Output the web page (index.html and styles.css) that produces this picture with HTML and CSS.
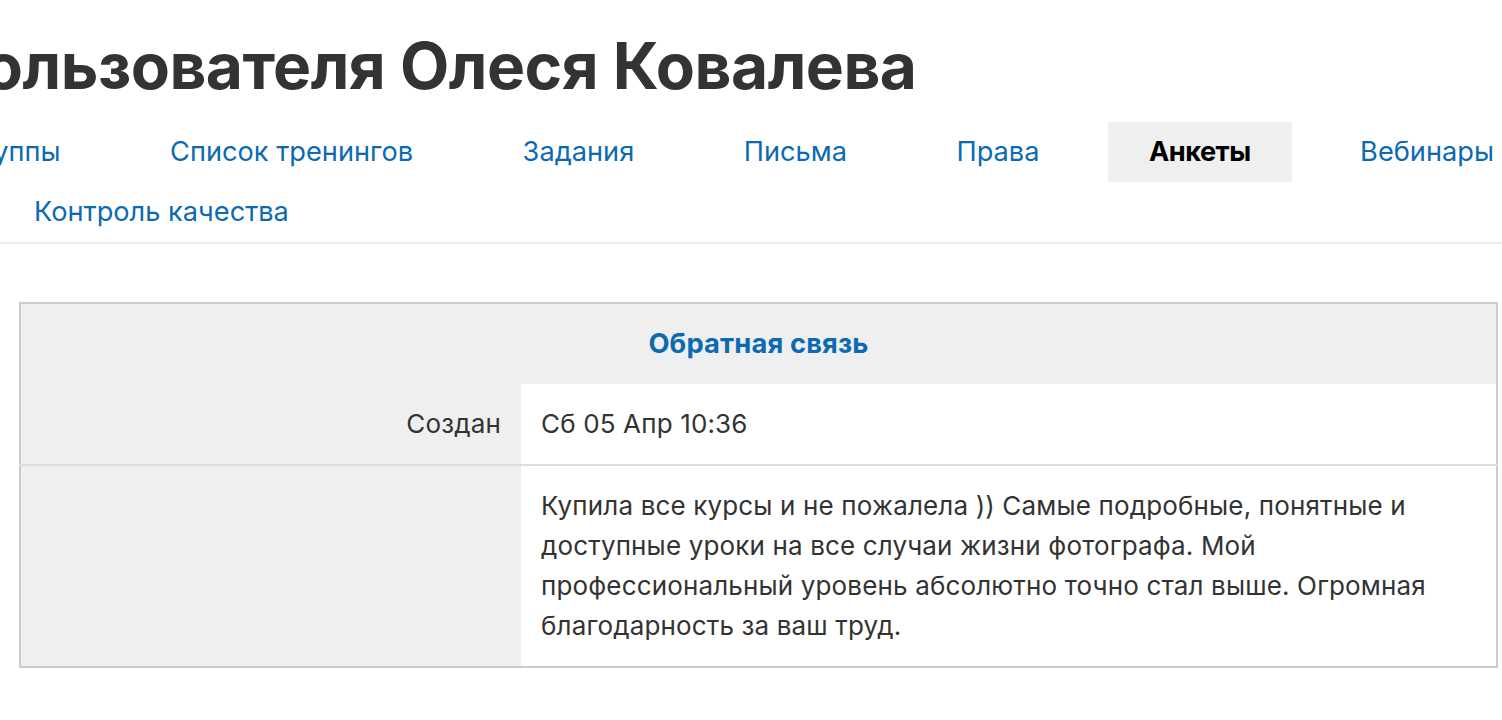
FILE: index.html
```html
<!DOCTYPE html>
<html lang="ru">
<head>
<meta charset="utf-8">
<title>Анкеты пользователя</title>
<link rel="stylesheet" href="styles.css">
</head>
<body>
<div class="page">
  <h1 class="title">Анкеты пользователя Олеся Ковалева</h1>
  <nav class="tabs">
    <a class="tab" href="#">Группы</a>
    <a class="tab" href="#">Список тренингов</a>
    <a class="tab" href="#">Задания</a>
    <a class="tab" href="#">Письма</a>
    <a class="tab" href="#">Права</a>
    <a class="tab tab-active" href="#">Анкеты</a>
    <a class="tab" href="#">Вебинары</a>
    <a class="tab tab-wrap" href="#">Контроль качества</a>
  </nav>
  <table class="form">
    <tr class="form-head">
      <th colspan="2">Обратная связь</th>
    </tr>
    <tr>
      <td class="label">Создан</td>
      <td class="value">Сб 05 Апр 10:36</td>
    </tr>
    <tr>
      <td class="label"></td>
      <td class="value">Купила все курсы и не пожалела )) Самые подробные, понятные и доступные уроки на все случаи жизни фотографа. Мой профессиональный уровень абсолютно точно стал выше. Огромная благодарность за ваш труд.</td>
    </tr>
  </table>
</div>
</body>
</html>
```
FILE: styles.css
```css
html, body {
  margin: 0;
  padding: 0;
  background: #fff;
  overflow: hidden;
}
body {
  font-family: Inter, "Noto Sans", sans-serif;
  color: #333;
}
.page {
  width: 1502px;
}
.title {
  margin: 0 0 0 -313px;
  padding-top: 26px;
  font-size: 64px;
  line-height: 80px;
  font-weight: 700;
  color: #333;
  white-space: nowrap;
  letter-spacing: -0.5px;
}
.tabs {
  display: flex;
  flex-wrap: wrap;
  column-gap: 27.5px;
  margin: 16px 0 0 -78px;
  width: 1640px;
  border-bottom: 2px solid #eee;
}
.tab {
  display: block;
  height: 60px;
  line-height: 60px;
  padding: 0 41px;
  font-size: 27.2px;
  color: #0b6ab2;
  text-decoration: none;
  white-space: nowrap;
}
.tab-active {
  background: #efefef;
  color: #000;
  font-weight: 700;
  letter-spacing: -0.5px;
}
.tab-wrap {
  margin-left: 71px;
}
.form {
  margin: 58px 0 0 19px;
  width: 1479px;
  border-collapse: collapse;
  border: 2px solid #ccc;
  font-size: 26px;
  line-height: 40px;
  letter-spacing: 0.15px;
}
.form-head th {
  background: #efefef;
  color: #0b6ab2;
  font-size: 27.3px;
  font-weight: 700;
  text-align: center;
  height: 80px;
  padding: 0;
}
.form td {
  padding: 20px;
  vertical-align: top;
  border-top: 2px solid #ddd;
}
.form-head + tr td {
  border-top: none;
}
.label {
  width: 460px;
  background: #efefef;
  text-align: right;
}
.value {
  background: #fff;
}
```
